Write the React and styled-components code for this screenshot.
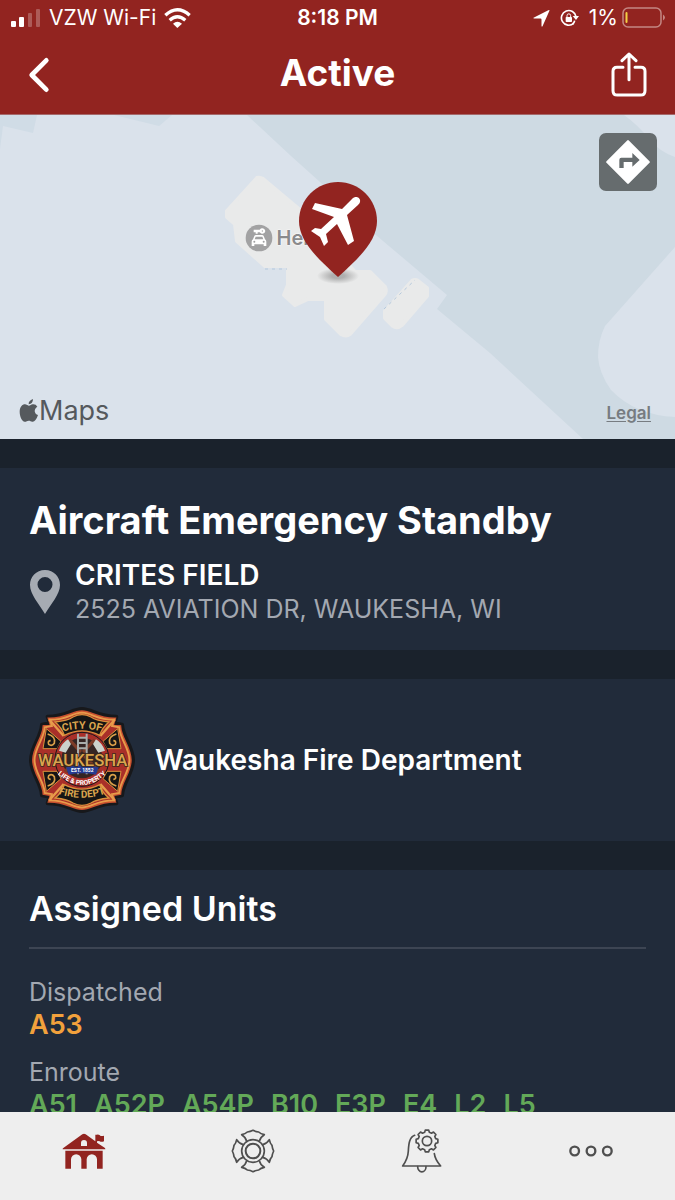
import styled, { createGlobalStyle } from "styled-components";

const GlobalStyle = createGlobalStyle`
    *,
    *::before,
    *::after {
        box-sizing: border-box;
    }

    body {
        margin: 0;
        background-color: #1a222c;
        color: #fff;
        font-family: Inter, "Liberation Sans", sans-serif;
    }

    h1,
    h2,
    h3,
    p {
        margin: 0;
    }

    button {
        display: flex;
        align-items: center;
        justify-content: center;
        padding: 0;
        border: none;
        background: none;
        color: inherit;
        font: inherit;
        cursor: pointer;
    }

    svg {
        display: block;
        flex-shrink: 0;
    }
`;

const Screen = styled.div`
    display: flex;
    flex-direction: column;
    height: 100vh;
`;

const Header = styled.header`
    flex-shrink: 0;
    background-color: #922420;
    border-bottom: 1px solid #a5696b;
`;

const StatusBar = styled.div`
    display: grid;
    grid-template-columns: 1fr auto 1fr;
    align-items: center;
    height: 36px;
    padding: 0 10px;
    font-size: 21px;
    line-height: 24px;
`;

const StatusGroup = styled.div`
    display: flex;
    align-items: center;
    justify-content: ${(props) => props.$align};
    gap: ${(props) => props.$gap};
`;

const Clock = styled.time`
    font-weight: 600;
`;

const NavBar = styled.nav`
    display: grid;
    grid-template-columns: 1fr auto 1fr;
    align-items: center;
    height: 78px;
    padding: 0 28px;
`;

const NavButton = styled.button`
    justify-self: ${(props) => props.$side};
`;

const Title = styled.h1`
    padding-bottom: 4px;
    font-size: 37px;
    font-weight: 700;
    line-height: 44px;
`;

const Content = styled.main`
    display: flex;
    flex-direction: column;
    gap: 29px;
    flex: 1;
    min-height: 0;
    overflow: hidden;
`;

const Map = styled.section`
    position: relative;
    flex-shrink: 0;
    height: 324px;
    background-color: #dae2eb;
    overflow: hidden;
`;

const MapCanvas = styled.svg`
    width: 100%;
    height: 100%;
`;

const MapPlace = styled.div`
    position: absolute;
    top: 109px;
    left: calc(50% - 93px);
    display: flex;
    align-items: center;
    gap: 4px;
    color: #8a8a8c;
    font-size: 20px;
    font-weight: 600;
    line-height: 28px;
    text-shadow:
        0 0 2px #fff,
        0 0 2px #fff;
`;

const MapPin = styled.svg`
    position: absolute;
    top: 66px;
    left: calc(50% - 39px);
`;

const DirectionsButton = styled.button`
    position: absolute;
    top: 18px;
    right: 18px;
    width: 58px;
    height: 58px;
    border-radius: 7px;
    background-color: #666c6e;
`;

const MapBrand = styled.div`
    position: absolute;
    bottom: 12px;
    left: 19px;
    display: flex;
    align-items: center;
    gap: 1px;
    color: #55595d;
    font-size: 27px;
    line-height: 32px;
`;

const LegalLink = styled.a`
    position: absolute;
    right: 24px;
    bottom: 16px;
    color: #777c81;
    font-size: 17px;
    font-weight: 600;
    line-height: 20px;
    text-underline-offset: 2px;
`;

const Card = styled.section`
    flex-shrink: 0;
    padding: ${(props) => props.$padding};
    background-color: #212b3a;
`;

const IncidentType = styled.h2`
    font-size: 38px;
    font-weight: 700;
    line-height: 48px;
`;

const Location = styled.div`
    display: flex;
    align-items: center;
    gap: 14px;
    margin-top: 14px;
`;

const Place = styled.p`
    font-size: 28px;
    font-weight: 600;
    line-height: 34px;
`;

const Address = styled.p`
    color: #a3a8b1;
    font-size: 25px;
    line-height: 34px;
`;

const Agency = styled(Card)`
    display: flex;
    align-items: center;
    gap: 20px;
`;

const AgencyName = styled.h3`
    font-size: 28px;
    font-weight: 600;
    line-height: 34px;
`;

const SectionTitle = styled.h2`
    padding-bottom: 16px;
    border-bottom: 2px solid #3d4553;
    font-size: 34px;
    font-weight: 600;
    line-height: 44px;
`;

const UnitGroup = styled.div`
    margin-top: ${(props) => props.$top};
`;

const UnitStatus = styled.p`
    color: #a3a8b1;
    font-size: 25px;
    line-height: 32px;
`;

const UnitList = styled.p`
    display: flex;
    gap: 17px;
    color: ${(props) => props.$color};
    font-size: 27px;
    font-weight: 600;
    line-height: 34px;
`;

const TabBar = styled.nav`
    display: grid;
    grid-template-columns: repeat(4, 1fr);
    flex-shrink: 0;
    height: 88px;
    background-color: #eee;
`;

const Tab = styled.button`
    padding-bottom: 10px;
    color: ${(props) => (props.$active ? "#922420" : "#4f4f4f")};
`;

function SignalIcon() {
    return (
        <svg width="31" height="20" viewBox="0 0 31 20" fill="#fff">
            <rect x="1" y="13" width="5" height="6" rx="1" />
            <rect x="9" y="9" width="5" height="10" rx="1" />
            <rect x="18" y="5" width="4" height="14" rx="1" opacity=".25" />
            <rect x="26" y="1" width="4" height="18" rx="1" opacity=".25" />
        </svg>
    );
}

function WifiIcon() {
    return (
        <svg width="27" height="20" viewBox="0 0 81 60">
            <g fill="none" stroke="#fff" strokeWidth="10">
                <path d="M4 22Q40 -11 77 22" />
                <path d="M17 37Q40 16 64 37" />
            </g>
            <path d="M27 47Q40 35 54 47L40 60Z" fill="#fff" />
        </svg>
    );
}

function LocationArrow() {
    return (
        <svg width="17" height="17" viewBox="0 0 50 50" fill="#fff">
            <path d="M48 3L28 48Q26 51 25 47V28Q25 25 22 25H3Q-1 24 3 22L45 1Q50 -1 48 3Z" />
        </svg>
    );
}

function RotationLock() {
    return (
        <svg width="19" height="18" viewBox="0 0 57 54">
            <path
                d="M41 43A22 22 0 1 1 48 23"
                fill="none"
                stroke="#fff"
                strokeWidth="5"
            />
            <path d="M38 21H57L48 33Z" fill="#fff" />
            <path d="M44 35Q43 41 38 45" fill="none" stroke="#fff" strokeWidth="5" />
            <rect x="17" y="24" width="19" height="15" rx="2" fill="#fff" />
            <path
                d="M21 25V20a5.500 5.500 0 0 1 11 0V25"
                fill="none"
                stroke="#fff"
                strokeWidth="3"
            />
        </svg>
    );
}

function BatteryIcon() {
    return (
        <svg width="43" height="22" viewBox="0 0 43 22">
            <rect
                x="1"
                y="1"
                width="38"
                height="19"
                rx="5"
                fill="none"
                stroke="#c48682"
                strokeWidth="1.500"
            />
            <path d="M41 7.500Q43 9 43 10.500Q43 12 41 13.500Z" fill="#c48682" />
            <rect x="3.500" y="5" width="2" height="11" rx="1" fill="#f3cf45" />
        </svg>
    );
}

function BackIcon() {
    return (
        <svg width="22" height="36" viewBox="0 0 66 108">
            <path
                d="M55 10L11 54L55 98"
                fill="none"
                stroke="#fff"
                strokeWidth="14"
                strokeLinecap="round"
                strokeLinejoin="round"
            />
        </svg>
    );
}

function ShareIcon() {
    return (
        <svg
            width="36"
            height="46"
            viewBox="0 0 108 138"
            fill="none"
            stroke="#fff"
            strokeWidth="9"
            strokeLinecap="round"
            strokeLinejoin="round"
        >
            <path d="M36 46H18Q6 46 6 58V116Q6 129 19 129H89Q102 129 102 116V58Q102 46 90 46H72" />
            <path d="M54 83V6M33 26L54 6L75 26" />
        </svg>
    );
}

function Terrain() {
    return (
        <MapCanvas viewBox="0 0 675 324" preserveAspectRatio="xMidYMid slice">
            <path
                d="M247 0L291 41L320 67L370 115L447 180L437 194L490 238L583 324H675V0Z"
                fill="#cedae3"
            />
            <path d="M0 0H37L33 18L3 11L0 34ZM114 0L159 11L172 0Z" fill="#d0dce6" />
            <path
                d="M675 132L605 211Q598 225 598 242Q599 258 611 275Q635 300 675 302ZM624 0Q638 10 650 25Q660 37 675 42V0Z"
                fill="#dae2eb"
            />
            <g fill="#e9eaea" stroke="#e9eaea" strokeWidth="4" strokeLinejoin="round">
                <path d="M257 63Q260 62 263 64L300 95L355 157H370L385 172Q387 177 384 180L350 219Q346 222 341 219L326 204V184H308L295 190L284 180L288 170V151H265L237 126L235 109L227 102V96Z" />
                <path d="M412 166Q415 164 418 166L427 173V181L402 210Q397 214 393 211L385 203V196Z" />
            </g>
            <path
                d="M265 154H287M384 194L415 165"
                fill="none"
                stroke="#b4c8dc"
                strokeWidth="1"
                strokeDasharray="3 4"
            />
        </MapCanvas>
    );
}

function CarRentalIcon() {
    return (
        <svg width="28" height="28" viewBox="0 0 84 84">
            <circle cx="42" cy="42" r="40" fill="#a2a2a3" />
            <g fill="#fff">
                <path d="M26 17H44A9 8 0 1 1 44 25H38V29H32V25H26Z" />
                <path d="M28 36Q29 33 33 33H51Q55 33 56 36L60 46Q64 48 64 53V66H56V61H28V66H20V53Q20 48 24 46ZM32 38L29 46H55L52 38Z" />
            </g>
            <circle cx="52" cy="21" r="2" fill="#a2a2a3" />
            <circle cx="28" cy="53" r="3" fill="#a2a2a3" />
            <circle cx="56" cy="53" r="3" fill="#a2a2a3" />
        </svg>
    );
}

function IncidentPin() {
    return (
        <MapPin width="78" height="104" viewBox="0 0 78 104">
            <defs>
                <radialGradient id="pin-shadow">
                    <stop offset=".3" stopColor="#888" stopOpacity=".6" />
                    <stop offset="1" stopColor="#888" stopOpacity="0" />
                </radialGradient>
            </defs>
            <ellipse cx="39" cy="95" rx="21" ry="8" fill="url(#pin-shadow)" />
            <path
                d="M39 1C60 1 78 18 78 40C78 60 60 77 39 96C18 77 0 60 0 40C0 18 18 1 39 1Z"
                fill="#922420"
            />
            <path
                d="M53 18C57 14 62 17 61 21Q61 22 59 24L48 34L55 60L49 64L38 43L27 53L29 61L25 65L21 56L12 50L16 47L22 48L35 36L13 28L16 22L43 28Z"
                fill="#fff"
            />
        </MapPin>
    );
}

function DirectionsIcon() {
    return (
        <svg width="44" height="44" viewBox="0 0 132 132">
            <path
                d="M66 4L128 66L66 128L4 66Z"
                fill="#fff"
                stroke="#fff"
                strokeWidth="7"
                strokeLinejoin="round"
            />
            <path d="M40 84V59Q40 53 46 53H79V39L101 60L79 80V66H53V84Z" fill="#666c6e" />
        </svg>
    );
}

function AppleIcon() {
    return (
        <svg width="19" height="24" viewBox="0 0 57 72" fill="currentColor">
            <path
                d="M42 0Q42 14 29 16Q28 5 42 0ZM29 20C35 20 36 15 43 16Q51 16 55 23C43 30 46 45 57 48C52 63 46 69 40 68C35 67 34 65 29 65C24 65 21 69 17 68C9 67 2 52 2 38C2 24 10 16 18 16C23 16 26 20 29 20Z"
            />
        </svg>
    );
}

function PlaceIcon() {
    return (
        <svg width="32" height="46" viewBox="0 0 32 46">
            <path
                d="M16 1C25 1 31 8 31 16C31 25 22 35 16 45C10 35 1 25 1 16C1 8 7 1 16 1ZM16 8A7.500 7.500 0 1 0 16 23A7.500 7.500 0 1 0 16 8Z"
                fill="#a6abb3"
                fillRule="evenodd"
            />
        </svg>
    );
}

function Scroll({ transform }) {
    return (
        <g transform={transform}>
            <path d="M80 102L124 140L112 162H70Z" fill="#151515" stroke="#d9903c" strokeWidth="3" />
            <path
                d="M84 118Q110 126 104 146Q97 156 87 149Q83 138 93 138"
                fill="none"
                stroke="#d9a04a"
                strokeWidth="5"
            />
        </g>
    );
}

const crossPath =
    "M187 43C219 44 234 66 290 66L284 86L307 90C309 128 340 156 340 196C340 236 309 264 307 302L284 306L290 326C234 326 219 348 187 349C155 348 140 326 84 326L90 306L67 302C65 264 34 236 34 196C34 156 65 128 67 90L90 86L84 66C140 66 155 44 187 43Z";

function DepartmentBadge() {
    return (
        <svg
            width="106"
            height="106"
            viewBox="28 37 318 318"
            role="img"
            aria-label="City of Waukesha Fire Dept"
        >
            <path
                d={crossPath}
                fill="#b3362c"
                stroke="#17181b"
                strokeWidth="12"
                strokeLinejoin="round"
            />
            <path
                d={crossPath}
                transform="translate(9 10) scale(.95)"
                fill="#a92f29"
                stroke="#c9502f"
                strokeWidth="9"
            />
            <path
                d={crossPath}
                transform="translate(13 14) scale(.93)"
                fill="none"
                stroke="#e79b4a"
                strokeWidth="6"
            />
            <path
                d="M88 74L132 124M286 74L242 124M88 318L132 268M286 318L242 268"
                stroke="#e79b4a"
                strokeWidth="7"
            />
            <Scroll />
            <Scroll transform="matrix(-1 0 0 1 374 0)" />
            <Scroll transform="matrix(1 0 0 -1 0 392)" />
            <Scroll transform="matrix(-1 0 0 -1 374 392)" />
            <path
                d="M106 82Q145 78 160 67Q187 53 214 67Q229 78 268 82Q248 98 240 122Q187 95 134 122Q126 98 106 82Z"
                fill="#151515"
                stroke="#d9903c"
                strokeWidth="4"
            />
            <path
                d="M106 310Q145 314 160 325Q187 339 214 325Q229 314 268 310Q248 294 240 270Q187 297 134 270Q126 294 106 310Z"
                fill="#151515"
                stroke="#d9903c"
                strokeWidth="4"
            />
            <circle cx="187" cy="194" r="81" fill="#a92f29" stroke="#17181b" strokeWidth="3" />
            <circle cx="187" cy="190" r="61" fill="#352523" />
            <path d="M132 228L221 132L228 138L140 235ZM242 228L153 132L146 138L234 235Z" fill="#7d3b27" />
            <path d="M118 168Q127 145 145 134L154 148L138 174ZM256 168Q247 145 229 134L220 148L236 174Z" fill="#cbd2cc" />
            <path
                d="M175 117V239M201 117V239M175 129H201M175 145H201M175 161H201M175 218H201"
                stroke="#a9adab"
                strokeWidth="6"
            />
            <path d="M139 218Q187 205 237 218L229 240Q187 232 147 240Z" fill="#263b91" />
            <g
                fontFamily="Roboto, Liberation Sans, sans-serif"
                fontWeight="700"
                textAnchor="middle"
                fill="#dba54e"
            >
                <text
                    x="189"
                    y="213"
                    fontSize="50"
                    fontWeight="500"
                    stroke="#3a281c"
                    strokeWidth="5"
                    paintOrder="stroke"
                >
                    WAUKESHA
                </text>
                <path id="badge-top" d="M128 111Q187 94 246 111" fill="none" />
                <text fontSize="32">
                    <textPath href="#badge-top" startOffset="50%">
                        CITY OF
                    </textPath>
                </text>
                <path id="badge-bottom" d="M112 296Q187 322 262 296" fill="none" />
                <text fontSize="30">
                    <textPath href="#badge-bottom" startOffset="50%">
                        FIRE DEPT
                    </textPath>
                </text>
                <text x="188" y="232" fontSize="15" fill="#fff">
                    EST. 1852
                </text>
                <path id="badge-motto" d="M106 230Q187 312 268 230" fill="none" />
                <text fontSize="20" fill="#fff">
                    <textPath href="#badge-motto" startOffset="50%">
                        LIFE &amp; PROPERTY
                    </textPath>
                </text>
            </g>
        </svg>
    );
}

function StationIcon() {
    return (
        <svg width="44" height="44" viewBox="188 178 132 132" fill="currentColor">
            <path d="M190 239Q189 236 193 234L249 194Q254 190 259 194L288 215V195H292Q300 193 304 199Q309 200 314 198V215Q306 218 301 215Q297 213 293 215V219L316 234Q319 237 318 239ZM245 229H263V220A9 9 0 0 0 245 220Z" />
            <path d="M198 243H310V297H293V269A15 15 0 0 0 262 269V297H246V269A15 15 0 0 0 215 269V297H198Z" />
        </svg>
    );
}

const lobeAngles = [0, 90, 180, 270];

function MalteseIcon() {
    return (
        <svg
            width="44"
            height="44"
            viewBox="695 178 132 132"
            fill="none"
            stroke="currentColor"
            strokeWidth="5"
            strokeLinejoin="round"
        >
            <circle cx="761" cy="244" r="34" />
            <circle cx="761" cy="244" r="22" strokeWidth="6" />
            {lobeAngles.map((angle) => (
                <path
                    key={angle}
                    d="M742 215Q739 202 727 195Q738 193 744 187Q753 186 761 182Q769 186 778 187Q784 193 795 195Q783 202 780 215"
                    transform={`rotate(${angle} 761 244)`}
                />
            ))}
        </svg>
    );
}

// Each tooth is four points, listed as [angle offset, radius]
const tooth = [
    [-15, 27],
    [-9, 33],
    [9, 33],
    [15, 27],
];

const gearPoints = Array.from({ length: 8 }, (_, i) =>
    tooth.map(([offset, radius]) => {
        const angle = ((i * 45 + offset) * Math.PI) / 180;
        return `${268 + radius * Math.cos(angle)},${214 + radius * Math.sin(angle)}`;
    }),
)
    .flat()
    .join(" ");

function AlertSettingsIcon() {
    return (
        <svg
            width="44"
            height="44"
            viewBox="187 178 132 132"
            fill="none"
            stroke="currentColor"
            strokeWidth="5"
            strokeLinecap="round"
            strokeLinejoin="round"
        >
            <path d="M231 197C215 203 213 222 212 244C211 265 203 278 195 289H309C299 278 292 268 290 252" />
            <path d="M240 291A12 15 0 0 0 265 291" />
            <polygon points={gearPoints} />
            <circle cx="268" cy="214" r="14" />
        </svg>
    );
}

function MoreIcon() {
    return (
        <svg
            width="44"
            height="44"
            viewBox="691 178 132 132"
            fill="none"
            stroke="currentColor"
            strokeWidth="7"
        >
            <circle cx="708" cy="244" r="13" />
            <circle cx="757" cy="244" r="13" />
            <circle cx="806" cy="244" r="13" />
        </svg>
    );
}

const unitGroups = [
    { status: "Dispatched", color: "#f2a13c", units: ["A53"] },
    {
        status: "Enroute",
        color: "#63a958",
        units: ["A51", "A52P", "A54P", "B10", "E3P", "E4", "L2", "L5"],
    },
];

const tabs = [
    { label: "Station", icon: <StationIcon /> },
    { label: "Department", icon: <MalteseIcon /> },
    { label: "Alert settings", icon: <AlertSettingsIcon /> },
    { label: "More", icon: <MoreIcon /> },
];

export default function App() {
    return (
        <>
            <GlobalStyle />
            <Screen>
                <Header>
                    <StatusBar>
                        <StatusGroup $align="flex-start" $gap="8px">
                            <SignalIcon />
                            <span>VZW Wi-Fi</span>
                            <WifiIcon />
                        </StatusGroup>
                        <Clock>8:18 PM</Clock>
                        <StatusGroup $align="flex-end" $gap="10px">
                            <LocationArrow />
                            <RotationLock />
                            <StatusGroup $align="flex-end" $gap="4px">
                                <span>1%</span>
                                <BatteryIcon />
                            </StatusGroup>
                        </StatusGroup>
                    </StatusBar>
                    <NavBar>
                        <NavButton $side="start" aria-label="Back">
                            <BackIcon />
                        </NavButton>
                        <Title>Active</Title>
                        <NavButton $side="end" aria-label="Share">
                            <ShareIcon />
                        </NavButton>
                    </NavBar>
                </Header>

                <Content>
                    <Map>
                        <Terrain />
                        <MapPlace>
                            <CarRentalIcon />
                            <span>Her</span>
                        </MapPlace>
                        <IncidentPin />
                        <DirectionsButton aria-label="Directions">
                            <DirectionsIcon />
                        </DirectionsButton>
                        <MapBrand>
                            <AppleIcon />
                            <span>Maps</span>
                        </MapBrand>
                        <LegalLink href="#legal">Legal</LegalLink>
                    </Map>

                    <Card $padding="28px 29px 24px">
                        <IncidentType>Aircraft Emergency Standby</IncidentType>
                        <Location>
                            <PlaceIcon />
                            <div>
                                <Place>CRITES FIELD</Place>
                                <Address>2525 AVIATION DR, WAUKESHA, WI</Address>
                            </div>
                        </Location>
                    </Card>

                    <Agency $padding="28px 29px">
                        <DepartmentBadge />
                        <AgencyName>Waukesha Fire Department</AgencyName>
                    </Agency>

                    <Card $padding="17px 29px">
                        <SectionTitle>Assigned Units</SectionTitle>
                        {unitGroups.map((group, i) => (
                            <UnitGroup key={group.status} $top={i === 0 ? "27px" : "14px"}>
                                <UnitStatus>{group.status}</UnitStatus>
                                <UnitList $color={group.color}>
                                    {group.units.map((unit) => (
                                        <span key={unit}>{unit}</span>
                                    ))}
                                </UnitList>
                            </UnitGroup>
                        ))}
                    </Card>
                </Content>

                <TabBar>
                    {tabs.map((tab, i) => (
                        <Tab key={tab.label} $active={i === 0} aria-label={tab.label}>
                            {tab.icon}
                        </Tab>
                    ))}
                </TabBar>
            </Screen>
        </>
    );
}
